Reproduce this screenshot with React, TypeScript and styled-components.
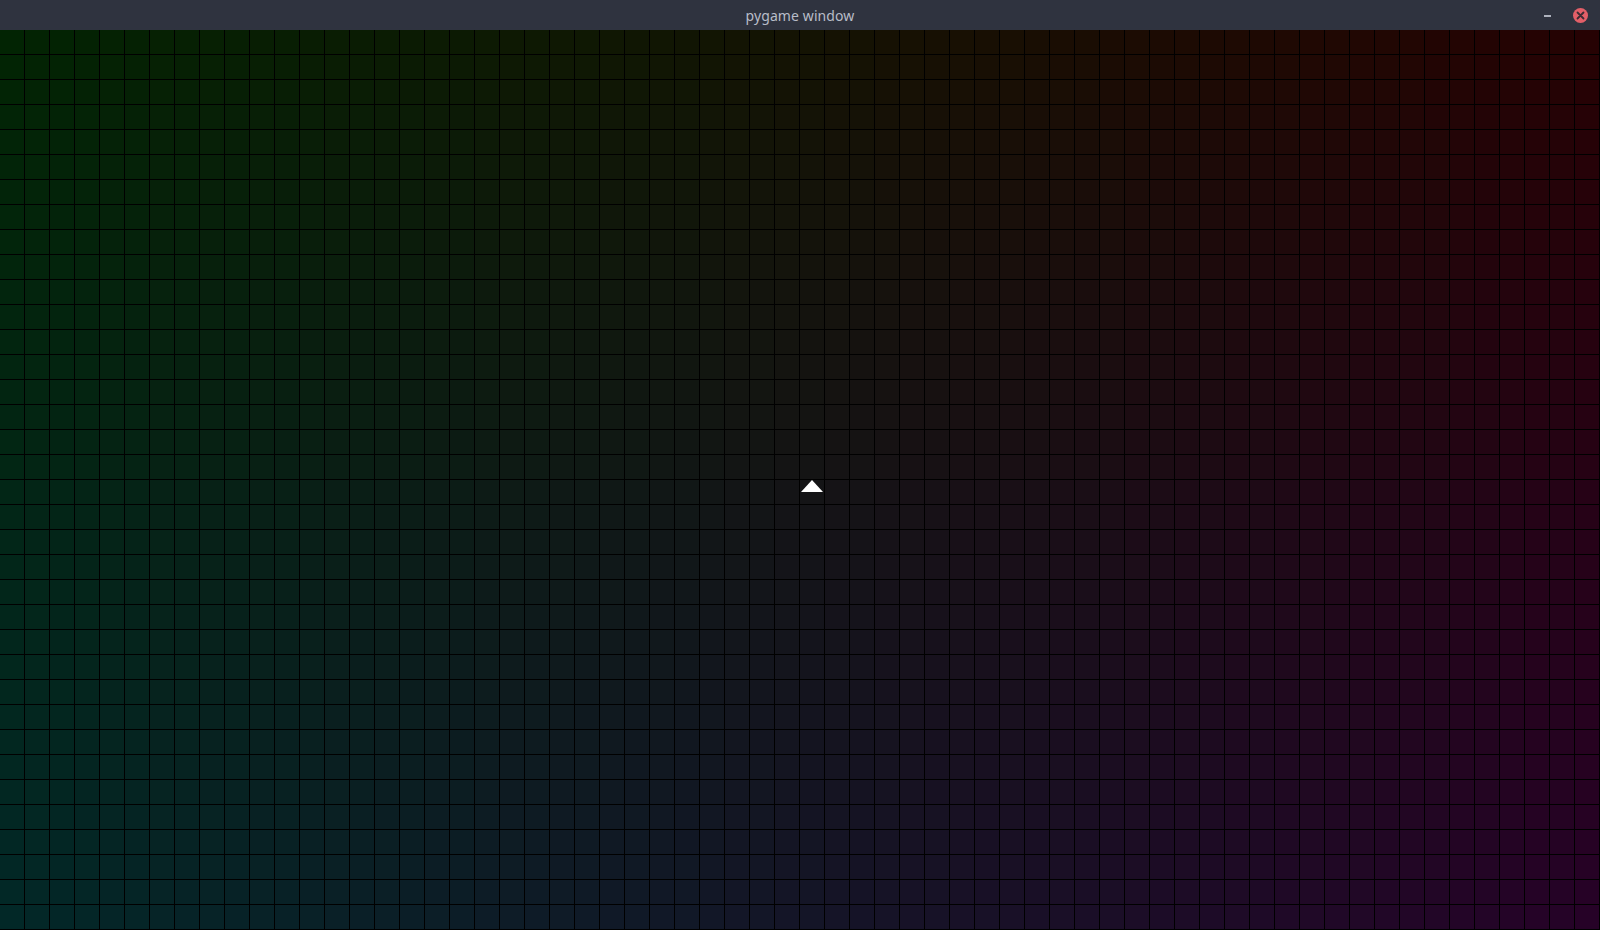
import React from "react";
import styled, { createGlobalStyle } from "styled-components";

const COLS = 64;
const ROWS = 36;
const PLAYER = { col: 32, row: 18 };

const Global = createGlobalStyle`
  html, body { margin: 0; padding: 0; background: #000; overflow: hidden; }
  body { font-family: "Noto Sans", "Open Sans", sans-serif; }
`;

const Window = styled.div`
  width: 1600px;
  height: 930px;
  display: flex;
  flex-direction: column;
  background: #000;
`;

const TitleBar = styled.div`
  height: 30px;
  flex: 0 0 30px;
  background: #2f333f;
  display: grid;
  grid-template-columns: 1fr auto 1fr;
  align-items: center;
  padding: 0 12px;
  box-sizing: border-box;
`;

const Title = styled.div`
  grid-column: 2;
  color: #b8bdc8;
  font-size: 14px;
  letter-spacing: 0.1px;
`;

const Controls = styled.div`
  grid-column: 3;
  justify-self: end;
  display: flex;
  align-items: center;
  gap: 22px;
`;

const MinButton = styled.div`
  width: 7px;
  height: 2px;
  background: #aeb2bd;
  margin-top: 1px;
`;

const CloseButton = styled.div`
  width: 15px;
  height: 15px;
  border-radius: 50%;
  background: #e35f68;
  display: flex;
  align-items: center;
  justify-content: center;
`;

const Board = styled.div`
  display: grid;
  grid-template-columns: repeat(${COLS}, 24px);
  grid-auto-rows: 24px;
  gap: 1px;
  padding: 0 1px 1px 0;
  background: #000;
  width: 1600px;
  height: 900px;
  box-sizing: border-box;
`;

const Cell = styled.div`
  position: relative;
  display: flex;
  align-items: flex-start;
  justify-content: center;
`;

function cellColor(c: number, r: number) {
  const x = (c + 0.5) / COLS;
  const y = (r + 0.5) / ROWS;
  const red = Math.round(2 + 36 * x);
  const green = Math.round(2 + 34 * (1 - x) + 4 * y * (1 - x));
  const blue = Math.round(2 + 38 * y);
  return `rgb(${red},${green},${blue})`;
}

export default function App() {
  const cells: React.ReactNode[] = [];
  for (let r = 0; r < ROWS; r++) {
    for (let c = 0; c < COLS; c++) {
      const isPlayer = r === PLAYER.row && c === PLAYER.col;
      cells.push(
        <Cell key={`${r}-${c}`} style={{ background: cellColor(c, r) }}>
          {isPlayer && (
            <svg width="24" height="24" viewBox="0 0 24 24">
              <polygon points="12,0 23,12 1,12" fill="#ffffff" />
            </svg>
          )}
        </Cell>
      );
    }
  }
  return (
    <>
      <Global />
      <Window>
        <TitleBar>
          <Title>pygame window</Title>
          <Controls>
            <MinButton />
            <CloseButton>
              <svg width="9" height="9" viewBox="0 0 9 9">
                <path d="M1.5 1.5 L7.5 7.5 M7.5 1.5 L1.5 7.5" stroke="#3b2c34" strokeWidth="1.8" strokeLinecap="round" />
              </svg>
            </CloseButton>
          </Controls>
        </TitleBar>
        <Board>{cells}</Board>
      </Window>
    </>
  );
}
